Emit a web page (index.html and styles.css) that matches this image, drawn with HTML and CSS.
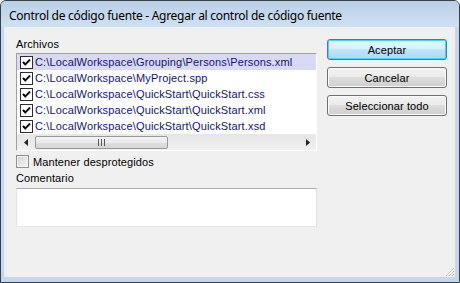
FILE: index.html
```html
<!DOCTYPE html>
<html lang="es">

<head>
    <meta charset="UTF-8">
    <meta name="viewport" content="width=device-width, initial-scale=1.0">
    <title>Control de código fuente</title>
    <link rel="stylesheet" href="styles.css">
</head>

<body>
    <div class="window">
        <div class="titlebar">
            <span class="title">Control de código fuente - Agregar al control de código fuente</span>
        </div>
        <div class="client">
            <div class="main">
                <div class="label files-label">Archivos</div>
                <div class="filelist">
                    <div class="rows">
                        <div class="row selected">
                            <span class="check"><svg width="11" height="11" viewBox="0 0 11 11"><path d="M2 5 L4.3 7.4 L9 2.6" fill="none" stroke="#000" stroke-width="2"/></svg></span>
                            <span class="path">C:\LocalWorkspace\Grouping\Persons\Persons.xml</span>
                        </div>
                        <div class="row">
                            <span class="check"><svg width="11" height="11" viewBox="0 0 11 11"><path d="M2 5 L4.3 7.4 L9 2.6" fill="none" stroke="#000" stroke-width="2"/></svg></span>
                            <span class="path">C:\LocalWorkspace\MyProject.spp</span>
                        </div>
                        <div class="row">
                            <span class="check"><svg width="11" height="11" viewBox="0 0 11 11"><path d="M2 5 L4.3 7.4 L9 2.6" fill="none" stroke="#000" stroke-width="2"/></svg></span>
                            <span class="path">C:\LocalWorkspace\QuickStart\QuickStart.css</span>
                        </div>
                        <div class="row">
                            <span class="check"><svg width="11" height="11" viewBox="0 0 11 11"><path d="M2 5 L4.3 7.4 L9 2.6" fill="none" stroke="#000" stroke-width="2"/></svg></span>
                            <span class="path">C:\LocalWorkspace\QuickStart\QuickStart.xml</span>
                        </div>
                        <div class="row">
                            <span class="check"><svg width="11" height="11" viewBox="0 0 11 11"><path d="M2 5 L4.3 7.4 L9 2.6" fill="none" stroke="#000" stroke-width="2"/></svg></span>
                            <span class="path">C:\LocalWorkspace\QuickStart\QuickStart.xsd</span>
                        </div>
                    </div>
                    <div class="hscroll">
                        <span class="arrow"><svg width="4" height="7" viewBox="0 0 4 7"><path d="M4 0 L0 3.5 L4 7 Z" fill="#222"/></svg></span>
                        <div class="track">
                            <div class="thumb">
                                <svg width="7" height="7" viewBox="0 0 7 7"><path d="M0.5 0 V7 M3.5 0 V7 M6.5 0 V7" stroke="#555" stroke-width="1"/></svg>
                            </div>
                        </div>
                        <span class="arrow"><svg width="4" height="7" viewBox="0 0 4 7"><path d="M0 0 L4 3.5 L0 7 Z" fill="#222"/></svg></span>
                    </div>
                </div>
                <label class="keep"><span class="box"></span>Mantener desprotegidos</label>
                <div class="label comment-label">Comentario</div>
                <div class="comment"></div>
            </div>
            <div class="buttons">
                <button class="btn default">Aceptar</button>
                <button class="btn">Cancelar</button>
                <button class="btn">Seleccionar todo</button>
            </div>
            <svg class="grip" width="11" height="11" viewBox="0 0 11 11">
                <path d="M10 2 L2 10 M10 5 L5 10 M10 8 L8 10" stroke="#9a9a9a" stroke-width="1" stroke-dasharray="1 1"/>
            </svg>
        </div>
    </div>
</body>

</html>
```

FILE: styles.css
```css
body {
    margin: 0;
    font-family: "Liberation Sans", Arial, sans-serif;
    font-size: 11px;
    color: #000;
}

.window {
    width: 460px;
    height: 283px;
    box-sizing: border-box;
    border: 1px solid #3a3f45;
    border-radius: 6px 6px 0 0;
    background: #c3d8ee;
    display: flex;
    flex-direction: column;
    padding: 0 4px 5px 4px;
}

.titlebar {
    height: 26px;
    margin: 0 -4px;
    padding-left: 8px;
    border-radius: 5px 5px 0 0;
    background: linear-gradient(#b9cfe7, #cfe0f2);
    display: flex;
    align-items: center;
}

.title {
    font-family: "Noto Sans", "Open Sans", sans-serif;
    font-size: 12px;
    letter-spacing: -0.28px;
    color: #000;
    padding-top: 2px;
}

.client {
    position: relative;
    flex: 1;
    background: #f0f0f0;
    display: flex;
    gap: 10px;
    padding: 11px 0 0 11px;
    box-shadow: -1px 0 0 #e4eef8;
}

.main {
    width: 301px;
    display: flex;
    flex-direction: column;
}

.label {
    line-height: 13px;
    letter-spacing: 0.1px;
}

.filelist {
    margin-top: 2px;
    border: 1px solid;
    border-color: #a0a0a0 #ffffff #ffffff #a0a0a0;
    background: #fff;
    display: flex;
    flex-direction: column;
}

.rows {
    display: flex;
    flex-direction: column;
}

.row {
    height: 16px;
    display: flex;
    align-items: center;
    padding-left: 3px;
    gap: 2px;
}

.row.selected {
    background: #d9d9f6;
}

.check {
    width: 11px;
    height: 11px;
    border: 1px solid #2b2b2b;
    background: #fff;
    display: flex;
}

.path {
    color: #14146e;
    letter-spacing: 0.15px;
    white-space: nowrap;
}

.hscroll {
    height: 15px;
    display: flex;
    background: linear-gradient(#e6e6e6, #f0f0f0);
    border-top: 1px solid #e8e8e8;
}

.arrow {
    width: 17px;
    display: flex;
    align-items: center;
    justify-content: center;
}

.track {
    flex: 1;
    padding: 1px 0 1px 1px;
    display: flex;
}

.thumb {
    width: 133px;
    box-sizing: border-box;
    border: 1px solid #979797;
    border-radius: 2px;
    background: linear-gradient(#f4f4f4, #e9e9e9 50%, #dedede 51%, #d8d8d8);
    display: flex;
    align-items: center;
    justify-content: center;
}

.keep {
    margin-top: 4px;
    height: 13px;
    display: flex;
    align-items: center;
    letter-spacing: 0.1px;
}

.box {
    width: 13px;
    height: 13px;
    box-sizing: border-box;
    border: 1px solid #8e8f8f;
    background: linear-gradient(135deg, #d4d4d4, #f6f6f6);
    box-shadow: inset 0 0 0 1px #f4f4f4;
    margin-right: 4px;
}

.comment-label {
    margin-top: 4px;
}

.comment {
    margin-top: 3px;
    height: 39px;
    box-sizing: border-box;
    background: #fff;
    border: 1px solid;
    border-color: #abadb3 #dbdfe6 #e3e9ef #e2e3ea;
}

.buttons {
    width: 120px;
    margin-top: 1px;
    display: flex;
    flex-direction: column;
    gap: 7px;
}

.btn {
    height: 21px;
    padding: 0;
    font-family: "Liberation Sans", Arial, sans-serif;
    font-size: 11px;
    letter-spacing: 0.1px;
    color: #000;
    border: 1px solid #707070;
    border-radius: 3px;
    background: linear-gradient(#f2f2f2, #ebebeb 45%, #dddddd 50%, #cfcfcf);
    box-shadow: inset 0 0 0 1px #fbfbfb;
}

.btn.default {
    border-color: #3c7fb1;
    background: linear-gradient(#eaf6fd, #d9f0fc 45%, #bee6fd 50%, #a7d9f5);
    box-shadow: inset 0 0 0 1px #48d2f8;
}

.grip {
    position: absolute;
    right: 0;
    bottom: 0;
}
```
